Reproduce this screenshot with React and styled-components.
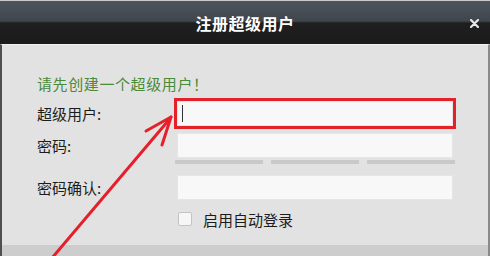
import React from "react";
import styled, { createGlobalStyle } from "styled-components";

const GlobalStyle = createGlobalStyle`
  html, body { margin: 0; padding: 0; background: #e2e2e2; }
  body { font-family: "Noto Sans CJK SC", "Noto Sans", sans-serif; }
`;

const Dialog = styled.div`
  position: relative;
  width: 490px;
  height: 256px;
  overflow: hidden;
  display: flex;
  flex-direction: column;
`;

const TitleBar = styled.div`
  position: relative;
  height: 43px;
  flex: none;
  display: flex;
  align-items: center;
  justify-content: center;
  border-top: 1px solid #c9c9c9;
  background: linear-gradient(
    to bottom,
    #4d545c 0px,
    #40464d 20px,
    #1f1f1f 22px,
    #1b1b1b 43px
  );
`;

const Title = styled.h1`
  margin: 0;
  font-size: 16px;
  font-weight: 700;
  color: #ffffff;
  letter-spacing: 0.5px;
`;

const CloseButton = styled.button`
  position: absolute;
  right: 10px;
  top: 16px;
  width: 12px;
  height: 12px;
  padding: 0;
  border: none;
  background: none;
  display: flex;
  align-items: center;
  justify-content: center;
`;

const Body = styled.div`
  flex: 1;
  background: #e2e2e2;
  border-left: 2px solid #4f4f4f;
  border-right: 2px solid #8a8a8a;
  border-top: 1px solid #f0f0f0;
  padding: 29px 0 0 35px;
`;

const Hint = styled.p`
  margin: 0 0 7px;
  height: 20px;
  line-height: 20px;
  font-size: 15px;
  color: #4a8a38;
  letter-spacing: 0.6px;
`;

const Row = styled.div`
  display: grid;
  grid-template-columns: 140px 276px;
  align-items: center;
  height: ${(p) => p.$h || 25}px;
  margin-top: ${(p) => p.$mt || 0}px;
`;

const Label = styled.label`
  font-size: 15px;
  color: #1c1c1c;
  line-height: 20px;
`;

const FieldWrap = styled.div`
  position: relative;
  height: 25px;
  outline: ${(p) => (p.$marked ? "3px solid #e4202b" : "none")};
`;

const Input = styled.input`
  box-sizing: border-box;
  width: 100%;
  height: 25px;
  margin: 0;
  border: 1px solid #e6e6e6;
  background: #f8f8f8;
  font: inherit;
  outline: none;
`;

const Caret = styled.span`
  position: absolute;
  left: 5px;
  top: 4px;
  width: 1px;
  height: 17px;
  background: #333;
`;

const Strength = styled.div`
  display: grid;
  grid-template-columns: repeat(3, 88px);
  gap: 8px;
  margin-left: -2px;
  height: 4px;
`;

const StrengthBar = styled.span`
  background: #c9c9c9;
`;

const CheckLabel = styled.label`
  display: flex;
  align-items: center;
  gap: 11px;
  font-size: 15px;
  color: #1c1c1c;
  margin-left: 1px;
`;

const Box = styled.span`
  box-sizing: border-box;
  width: 14px;
  height: 14px;
  border: 1px solid #c4c4c4;
  border-radius: 2px;
  background: #f6f6f6;
`;

const Footer = styled.div`
  height: 11px;
  flex: none;
  background: #cdcdcd;
  border-left: 2px solid #4f4f4f;
  border-right: 2px solid #8a8a8a;
`;

const Annotation = styled.svg`
  position: absolute;
  left: 0;
  top: 0;
  pointer-events: none;
`;

export default function App() {
  return (
    <>
      <GlobalStyle />
      <Dialog>
        <TitleBar>
          <Title>注册超级用户</Title>
          <CloseButton aria-label="关闭">
            <svg width="9" height="9" viewBox="0 0 9 9">
              <path d="M1 1L8 8M8 1L1 8" stroke="#e6e6e6" strokeWidth="2.2" strokeLinecap="round" />
            </svg>
          </CloseButton>
        </TitleBar>
        <Body>
          <Hint>请先创建一个超级用户！</Hint>
          <Row>
            <Label>超级用户:</Label>
            <FieldWrap $marked>
              <Input type="text" />
              <Caret />
            </FieldWrap>
          </Row>
          <Row $mt={7}>
            <Label>密码:</Label>
            <FieldWrap>
              <Input type="password" />
            </FieldWrap>
          </Row>
          <Row $h={4} $mt={2}>
            <span />
            <Strength>
              <StrengthBar />
              <StrengthBar />
              <StrengthBar />
            </Strength>
          </Row>
          <Row $mt={11}>
            <Label>密码确认:</Label>
            <FieldWrap>
              <Input type="password" />
            </FieldWrap>
          </Row>
          <Row $h={24} $mt={7}>
            <span />
            <CheckLabel>
              <Box />
              启用自动登录
            </CheckLabel>
          </Row>
        </Body>
        <Footer />
        <Annotation width="490" height="256" viewBox="0 0 490 256">
          <g stroke="#e5202b" strokeWidth="3" strokeLinecap="round" fill="none">
            <path d="M52 258L168 121" />
            <path d="M171 117L146 131" />
            <path d="M171 117L162 145" />
          </g>
        </Annotation>
      </Dialog>
    </>
  );
}
